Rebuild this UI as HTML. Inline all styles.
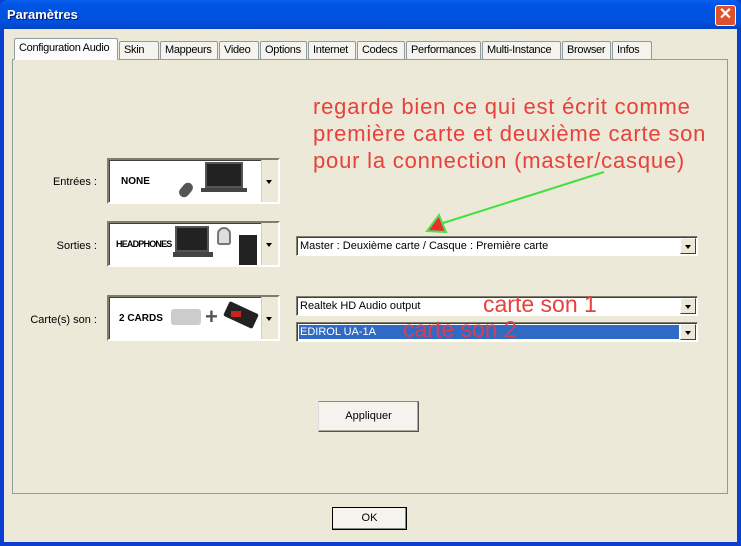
<!DOCTYPE html>
<html><head><meta charset="utf-8"><style>
*{margin:0;padding:0;box-sizing:border-box}
body{width:741px;height:546px;overflow:hidden;background:#0a3fcf;font-family:"Liberation Sans",sans-serif;font-size:11px;color:#000;position:relative}
.win{position:absolute;left:4px;top:29px;width:733px;height:513px;background:#ece9d8}
.title{position:absolute;left:0;top:0;width:741px;height:29px;background:linear-gradient(#0a5ef0,#0054e3 20%,#0050dc 80%,#0040c0);border-radius:7px 7px 0 0}
.title span{position:absolute;left:7px;top:7px;color:#fff;font-weight:bold;font-size:13px;text-shadow:1px 1px #0a1a70}
.close{position:absolute;left:715px;top:5px;width:21px;height:21px;background:#e0502a;border:1px solid #fff;border-radius:3px;color:#fff;font-size:16px;line-height:18px;text-align:center;font-weight:bold}
.a{position:absolute}
.tab{position:absolute;top:41px;height:18px;border:1px solid #919b9c;border-bottom:none;background:#f4f3ee;border-radius:2px 2px 0 0;padding:2px 0 0 4px;letter-spacing:-.3px;white-space:nowrap;overflow:hidden}
.panel{position:absolute;left:12px;top:59px;width:716px;height:435px;border:1px solid #919b9c;background:#ece9d8}
.pic{position:absolute;left:107px;width:173px;height:46px;background:#fff;border:2px solid;border-color:#7f7d70 #fff #fff #7f7d70;box-shadow:inset 1px 1px #404040}
.pic b{position:absolute;left:10px;top:16px;font-family:"Liberation Sans",sans-serif;font-size:10px;font-weight:900}
.pdrop{position:absolute;right:0;top:0;width:17px;height:100%;background:#ece9d8;border-left:1px solid #ccc}
.pdrop:after,.dd:after{content:"";position:absolute;left:4px;top:50%;margin-top:-1px;border:3px solid transparent;border-top:4px solid #000}
.lbl{position:absolute;text-align:right;width:90px;left:7px}
.cmb{position:absolute;left:296px;width:402px;height:20px;background:#fff;border:1px solid;border-color:#7f7d70 #fff #fff #7f7d70;box-shadow:inset 1px 1px #404040;padding:3px 0 0 3px}
.dd{position:absolute;right:1px;top:1px;width:16px;height:16px;background:#ece9d8;border:1px solid;border-color:#fff #404040 #404040 #fff}
.btn{position:absolute;background:#f4f3ee;border:1px solid #003c74;border-radius:2px;text-align:center}
.red{position:absolute;color:#e8403a;font-family:"Liberation Sans",sans-serif}
</style></head><body>
<div class="title"><span>Paramètres</span><div class="close">✕</div></div>
<div class="win"></div>
<div class="panel"></div>
<div class="tab" style="left:14px;top:38px;height:22px;width:104px;background:#fcfcfe;z-index:2;border-bottom:1px solid #fcfcfe;padding-top:3px">Configuration Audio</div>
<div class="tab" style="left:119px;width:40px">Skin</div>
<div class="tab" style="left:160px;width:58px">Mappeurs</div>
<div class="tab" style="left:219px;width:40px">Video</div>
<div class="tab" style="left:260px;width:47px">Options</div>
<div class="tab" style="left:308px;width:48px">Internet</div>
<div class="tab" style="left:357px;width:48px">Codecs</div>
<div class="tab" style="left:406px;width:75px">Performances</div>
<div class="tab" style="left:482px;width:79px">Multi-Instance</div>
<div class="tab" style="left:562px;width:49px">Browser</div>
<div class="tab" style="left:612px;width:40px">Infos</div>

<div class="lbl" style="top:176px">Entrées :</div>
<div class="lbl" style="top:240px">Sorties :</div>
<div class="lbl" style="top:314px">Carte(s) son :</div>

<div class="pic" style="top:158px"><b style="left:12px">NONE</b>
<div class="a" style="left:96px;top:2px;width:38px;height:26px;background:#222;border:2px solid #555"></div><div class="a" style="left:92px;top:28px;width:46px;height:4px;background:#444"></div><div class="a" style="left:72px;top:22px;width:10px;height:16px;background:#555;border-radius:5px;transform:rotate(40deg)"></div>
<div class="pdrop"></div></div>
<div class="pic" style="top:221px"><b style="left:7px;font-size:9px;letter-spacing:-.8px">HEADPHONES</b>
<div class="a" style="left:66px;top:3px;width:34px;height:26px;background:#222;border:2px solid #555"></div><div class="a" style="left:64px;top:29px;width:40px;height:5px;background:#444"></div><div class="a" style="left:108px;top:4px;width:14px;height:18px;border:2px solid #777;border-radius:8px 8px 3px 3px;background:#ddd"></div><div class="a" style="left:130px;top:12px;width:18px;height:30px;background:#222"></div>
<div class="pdrop"></div></div>
<div class="pic" style="top:295px"><b>2 CARDS</b>
<div class="a" style="left:62px;top:12px;width:30px;height:16px;background:#ccc;border-radius:3px"></div><div class="a" style="left:96px;top:13px;font:bold 22px 'Liberation Sans';color:#555;line-height:14px">+</div><div class="a" style="left:116px;top:10px;width:32px;height:16px;background:#222;transform:rotate(25deg);border-radius:2px"></div><div class="a" style="left:122px;top:14px;width:10px;height:6px;background:#c22"></div>
<div class="pdrop"></div></div>

<div class="cmb" style="top:236px">Master : Deuxième carte / Casque : Première carte<div class="dd"></div></div>
<div class="cmb" style="top:296px">Realtek HD Audio output<div class="dd"></div></div>
<div class="cmb" style="top:322px;padding:0;"><div style="position:absolute;left:2px;top:2px;right:18px;bottom:2px;background:#316ac5;color:#fff;padding:1px 0 0 1px">EDIROL UA-1A</div><div class="dd"></div></div>

<div class="red" style="left:313px;top:93px;font-size:22px;line-height:27px;letter-spacing:.8px;white-space:nowrap">regarde bien ce qui est écrit comme<br>première carte et deuxième carte son<br>pour la connection (master/casque)</div>
<div class="red" style="left:483px;top:291px;font-size:23px">carte son 1</div>
<div class="red" style="left:403px;top:316px;font-size:23px;color:#d84050">carte son 2</div>

<svg class="a" style="left:0;top:0" width="741" height="546"><line x1="604" y1="172" x2="440" y2="224" stroke="#40e040" stroke-width="2"/><polygon points="427,231 446,232 439,215" fill="#e83030" stroke="#50e050" stroke-width="2"/></svg>

<div class="btn" style="left:318px;top:401px;width:101px;height:31px;padding-top:8px;border-color:#888 #555 #555 #ddd;border-radius:0;box-shadow:inset -1px -1px #aca899">Appliquer</div>
<div class="btn" style="left:332px;top:507px;width:75px;height:23px;padding-top:4px;border:1px solid #000;border-radius:0;box-shadow:inset -1px -1px #888">OK</div>
</body></html>
